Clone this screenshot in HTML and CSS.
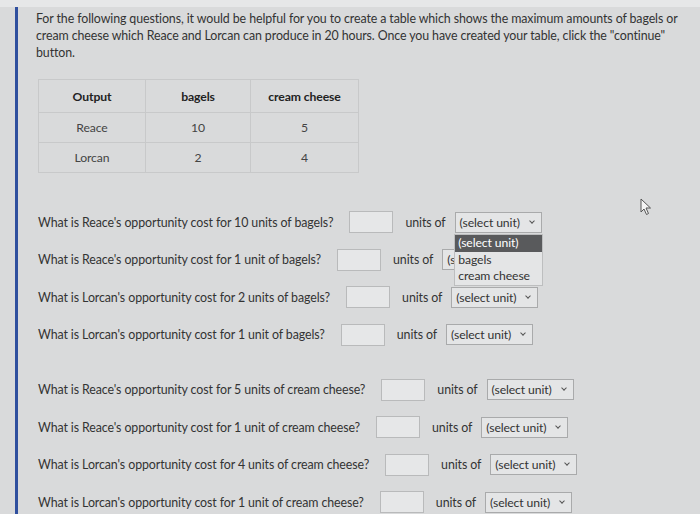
FILE: index.html
```html
<!DOCTYPE html>
<html>
<head>
<meta charset="utf-8">
<link rel="stylesheet" href="styles.css">
</head>
<body>
<div class="topstrip"></div>
<div class="page">
  <div class="bar"></div>
  <div class="content">
    <p class="intro">For the following questions, it would be helpful for you to create a table which shows the maximum amounts of bagels or cream cheese which Reace and Lorcan can produce in 20 hours. Once you have created your table, click the "continue" button.</p>
    <table class="grid">
      <tr><th>Output</th><th>bagels</th><th>cream cheese</th></tr>
      <tr><td>Reace</td><td>10</td><td>5</td></tr>
      <tr><td>Lorcan</td><td>2</td><td>4</td></tr>
    </table>
    <div class="qgroup g1">
      <div class="q"><span class="qt">What is Reace's opportunity cost for 10 units of bagels?</span><span class="box"></span><span class="uo">units of</span><span class="sel">(select unit)<span class="chev"></span></span></div>
      <div class="q"><span class="qt">What is Reace's opportunity cost for 1 unit of bagels?</span><span class="box"></span><span class="uo">units of</span><span class="sel open">(s<span class="chev"></span>
        <span class="menu"><span class="opt hl">(select unit)</span><span class="opt">bagels</span><span class="opt">cream cheese</span></span></span></div>
      <div class="q"><span class="qt">What is Lorcan's opportunity cost for 2 units of bagels?</span><span class="box"></span><span class="uo">units of</span><span class="sel">(select unit)<span class="chev"></span></span></div>
      <div class="q"><span class="qt">What is Lorcan's opportunity cost for 1 unit of bagels?</span><span class="box"></span><span class="uo">units of</span><span class="sel">(select unit)<span class="chev"></span></span></div>
    </div>
    <div class="qgroup g2">
      <div class="q"><span class="qt">What is Reace's opportunity cost for 5 units of cream cheese?</span><span class="box"></span><span class="uo">units of</span><span class="sel">(select unit)<span class="chev"></span></span></div>
      <div class="q"><span class="qt">What is Reace's opportunity cost for 1 unit of cream cheese?</span><span class="box"></span><span class="uo">units of</span><span class="sel">(select unit)<span class="chev"></span></span></div>
      <div class="q"><span class="qt">What is Lorcan's opportunity cost for 4 units of cream cheese?</span><span class="box"></span><span class="uo">units of</span><span class="sel">(select unit)<span class="chev"></span></span></div>
      <div class="q"><span class="qt">What is Lorcan's opportunity cost for 1 unit of cream cheese?</span><span class="box"></span><span class="uo">units of</span><span class="sel">(select unit)<span class="chev"></span></span></div>
    </div>
  </div>
</div>
<svg class="cursor" width="12" height="18" viewBox="0 0 12 18"><path d="M1 1 L1 14 L4 11 L6.5 16.5 L8.5 15.5 L6 10 L10.5 10 Z" fill="#f4f4f4" stroke="#555" stroke-width="1"/></svg>
</body>
</html>
```
FILE: styles.css
```css
html, body {
  margin: 0;
  padding: 0;
}
body {
  background: #d9dadb;
  font-family: Lato, "Liberation Sans", sans-serif;
  color: #333;
  width: 700px;
  height: 514px;
  overflow: hidden;
  position: relative;
}
.topstrip {
  height: 7px;
  background: #e6e7e8;
}
.page {
  display: flex;
  height: 507px;
}
.bar {
  width: 3px;
  margin-left: 15px;
  background: #2f4f9e;
  flex: none;
}
.content {
  padding-left: 18px;
  padding-right: 12px;
  flex: 1;
}
.intro {
  margin: 3px 0 0 0;
  font-size: 12.4px;
  letter-spacing: -0.1px;
  line-height: 17px;
}
.grid {
  border-collapse: collapse;
  margin: 18px 0 0 2px;
  font-size: 12.2px;
  letter-spacing: -0.1px;
}
.grid th, .grid td {
  border: 1px solid #c8c9ca;
  text-align: center;
  padding: 0;
}
.grid th {
  height: 32px;
  font-weight: 700;
  color: #222;
}
.grid td {
  height: 29px;
  color: #444;
}
.grid tr > :nth-child(1) { width: 106px; }
.grid tr > :nth-child(2) { width: 104px; }
.grid tr > :nth-child(3) { width: 107px; }
.qgroup {
  margin-left: 2px;
  display: flex;
  flex-direction: column;
  gap: 15.5px;
}
.g1 { margin-top: 38px; }
.g2 { margin-top: 33px; }
.q {
  display: flex;
  align-items: center;
  height: 22px;
  font-size: 12.4px;
  letter-spacing: -0.1px;
}
.qt { margin-right: 16px; white-space: nowrap; }
.box {
  width: 42px;
  height: 20px;
  border: 1px solid #b9babb;
  background: #e6e7e8;
  margin-right: 12px;
}
.uo { margin-right: 9px; white-space: nowrap; }
.sel {
  position: relative;
  width: 81px;
  height: 19px;
  border: 1px solid #a9aaab;
  background: #e4e5e6;
  padding-left: 4px;
  font-size: 12.2px;
  line-height: 19px;
  white-space: nowrap;
}
.chev {
  position: absolute;
  right: 7px;
  top: 6px;
  width: 3px;
  height: 3px;
  border-right: 1px solid #555;
  border-bottom: 1px solid #555;
  transform: rotate(45deg);
}
.open .menu {
  position: absolute;
  left: 11px;
  top: -16px;
  width: 87px;
  background: #e4e5e6;
  border: 1px solid #bdbebf;
  display: flex;
  flex-direction: column;
  z-index: 2;
}
.opt {
  height: 16.5px;
  line-height: 16.5px;
  padding-left: 3px;
  font-size: 12.2px;
  color: #333;
}
.opt.hl {
  background: #595a5c;
  color: #fff;
}
.cursor {
  position: absolute;
  left: 640px;
  top: 198px;
}
```
